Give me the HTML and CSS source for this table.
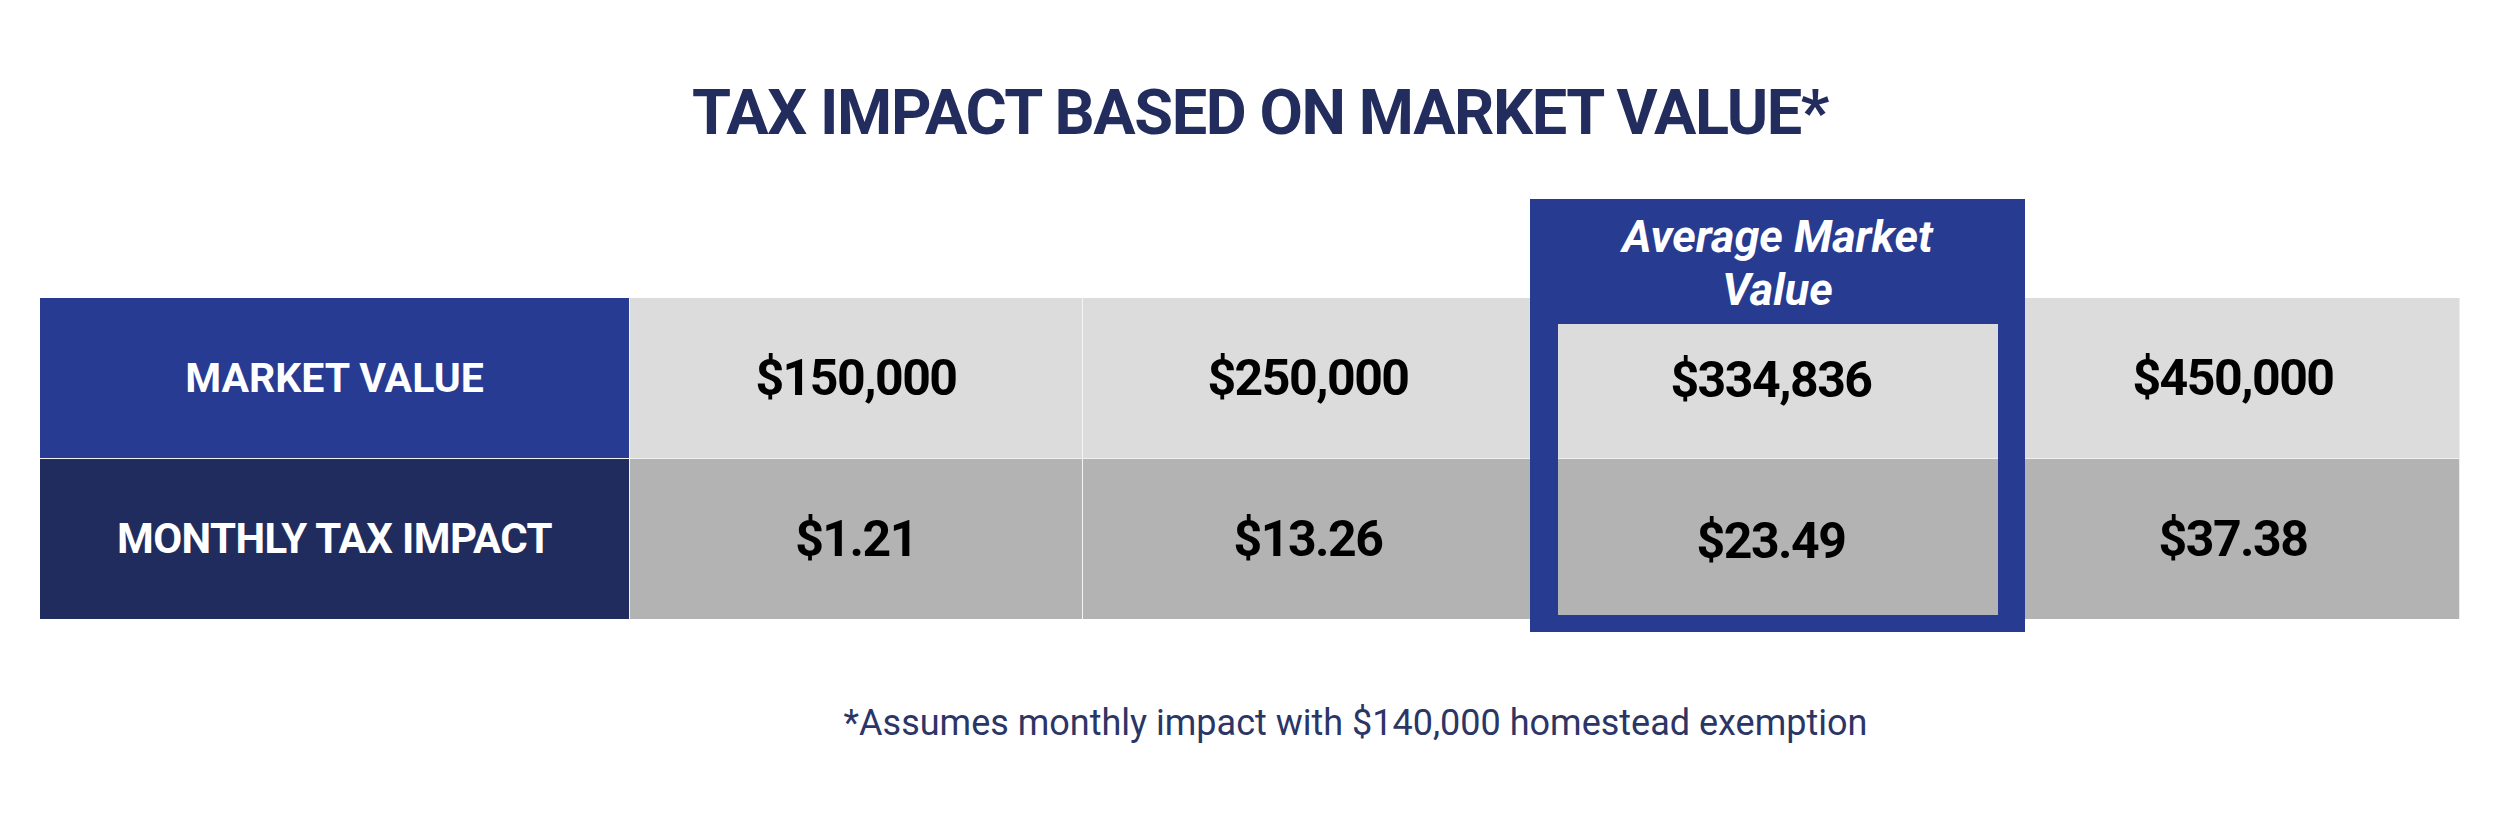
FILE: index.html
```html
<!DOCTYPE html>
<html lang="en">
<head>
<meta charset="utf-8">
<title>Tax Impact Based on Market Value</title>
<link rel="stylesheet" href="styles.css">
</head>
<body>
<main class="page">
  <h1 class="title">TAX IMPACT BASED ON MARKET VALUE*</h1>
  <div class="table">
    <div class="col col-label">
      <div class="cell label-top">MARKET VALUE</div>
      <div class="cell label-bottom">MONTHLY TAX IMPACT</div>
    </div>
    <div class="col col-2">
      <div class="cell light">$150,000</div>
      <div class="cell dark">$1.21</div>
    </div>
    <div class="col col-3">
      <div class="cell light">$250,000</div>
      <div class="cell dark">$13.26</div>
    </div>
    <div class="col highlight">
      <div class="hl-head">Average Market<br>Value</div>
      <div class="cell light hl-light">$334,836</div>
      <div class="cell dark hl-dark">$23.49</div>
    </div>
    <div class="col col-5">
      <div class="cell light">$450,000</div>
      <div class="cell dark">$37.38</div>
    </div>
  </div>
  <p class="note">*Assumes monthly impact with $140,000 homestead exemption</p>
</main>
</body>
</html>
```
FILE: styles.css
```css
html, body {
  margin: 0;
  padding: 0;
  background: #ffffff;
}
body {
  width: 2500px;
  height: 827px;
  overflow: hidden;
  font-family: Roboto, "Liberation Sans", sans-serif;
}
.page {
  display: flex;
  flex-direction: column;
  width: 2500px;
}
.title {
  margin: 81px 0 0 0;
  padding-left: 20px;
  font-size: 63px;
  line-height: 63px;
  font-weight: 700;
  color: #222d5e;
  text-align: center;
  letter-spacing: -1.4px;
}
.table {
  display: flex;
  align-items: flex-start;
  width: 2420px;
  margin: 55px 0 0 40px;
}
.col {
  display: flex;
  flex-direction: column;
  box-sizing: border-box;
  flex: none;
}
.col-label,
.col-2,
.col-3,
.col-5 {
  margin-top: 99px;
}
.col-label { width: 589px; }
.col-2 { width: 453px; border-left: 1px solid #f4f4f4; }
.col-3 { width: 448px; border-left: 1px solid #f4f4f4; }
.col-3 .cell { padding-left: 3px; }
.col-5 { width: 435px; border-right: 1px solid #ececec; }
.col-5 .cell { padding-right: 18px; }
.cell {
  display: flex;
  align-items: center;
  justify-content: center;
  box-sizing: border-box;
  font-weight: 700;
  font-size: 50px;
  line-height: 50px;
  letter-spacing: -1.5px;
  color: #000000;
}
.col .cell:first-child,
.hl-light {
  border-bottom: 1px solid #f0f0f0;
}
.light {
  height: 161px;
  background: #dcdcdc;
}
.dark {
  height: 160px;
  background: #b3b3b3;
}
.label-top {
  height: 161px;
  background: #263b91;
  color: #ffffff;
  font-size: 41px;
  line-height: 41px;
  letter-spacing: 0;
  border-bottom: 1px solid #c9cde0;
}
.label-bottom {
  height: 160px;
  background: #212c5e;
  color: #ffffff;
  font-size: 42px;
  line-height: 42px;
  letter-spacing: -0.6px;
}
.highlight {
  width: 495px;
  height: 433px;
  background: #273b91;
  padding: 0 27px 17px 28px;
}
.hl-head {
  height: 125px;
  box-sizing: border-box;
  padding-top: 11px;
  padding-right: 1px;
  text-align: center;
  color: #ffffff;
  font-style: italic;
  font-weight: 700;
  font-size: 45px;
  line-height: 53px;
}
.hl-light {
  height: 135px;
  padding: 0 14px 23px 0;
}
.hl-dark {
  height: 156px;
  padding: 8px 14px 0 0;
}
.note {
  margin: 73px 0 0 0;
  padding-left: 211px;
  text-align: center;
  font-size: 36px;
  line-height: 36px;
  font-weight: 400;
  color: #2b3566;
}
```
